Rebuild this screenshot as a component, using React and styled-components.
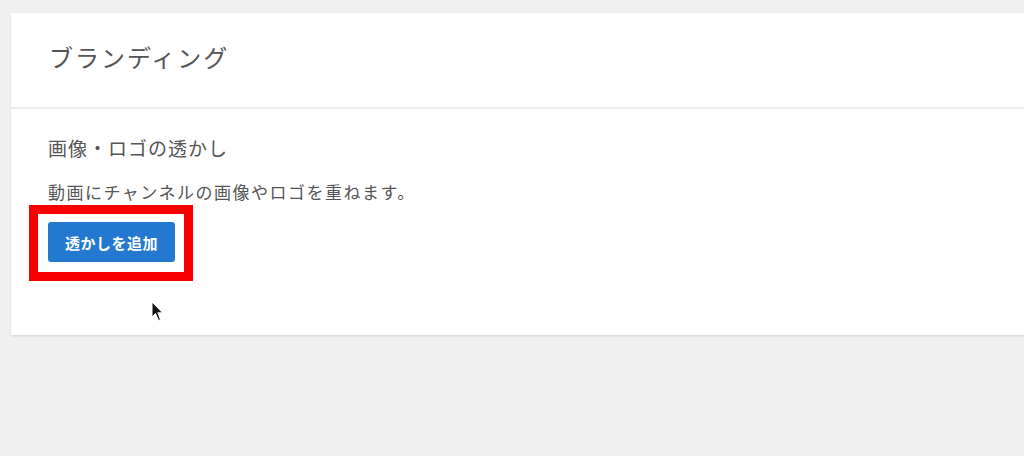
import React from "react";
import styled, { createGlobalStyle } from "styled-components";

const GlobalStyle = createGlobalStyle`
  html, body {
    margin: 0;
    padding: 0;
    background: #f0f0f0;
    font-family: "Noto Sans CJK JP", "Noto Sans", sans-serif;
  }
`;

const Page = styled.div`
  width: 1024px;
  height: 456px;
  overflow: hidden;
  padding: 13px 0 0 11px;
  box-sizing: border-box;
`;

const Card = styled.section`
  position: relative;
  width: 1040px;
  height: 322px;
  background: #fff;
  box-shadow: 0 1px 2px rgba(0, 0, 0, 0.12);
`;

const CardHeader = styled.div`
  height: 96px;
  box-sizing: border-box;
  display: flex;
  align-items: center;
  padding: 0 0 8px 38px;
  border-bottom: 2px solid #ececec;
`;

const Title = styled.h2`
  margin: 0;
  font-size: 24px;
  font-weight: 400;
  color: #555;
  letter-spacing: 2px;
`;

const Body = styled.div`
  padding: 25px 0 0 37px;
`;

const SectionTitle = styled.h3`
  margin: 0;
  font-size: 19px;
  font-weight: 400;
  color: #555;
  line-height: 28px;
  letter-spacing: 1px;
`;

const Desc = styled.p`
  margin: 16px 0 0;
  font-size: 17px;
  color: #555;
  line-height: 28px;
  letter-spacing: 1.5px;
`;

const ButtonSlot = styled.div`
  position: relative;
  display: inline-block;
  margin-top: 16px;
`;

const Button = styled.button`
  width: 127px;
  height: 40px;
  border: none;
  border-radius: 3px;
  background: #2279cf;
  color: #fff;
  font-family: inherit;
  font-size: 15px;
  font-weight: 700;
  letter-spacing: 0.5px;
  display: block;
`;

const Highlight = styled.div`
  position: absolute;
  left: -19px;
  top: -17px;
  right: -18px;
  bottom: -19px;
  border: 9px solid #f80000;
  pointer-events: none;
`;

const Cursor = styled.svg`
  position: absolute;
  left: 140px;
  top: 288px;
`;

export default function App() {
  return (
    <>
      <GlobalStyle />
      <Page>
        <Card>
          <CardHeader>
            <Title>ブランディング</Title>
          </CardHeader>
          <Body>
            <SectionTitle>画像・ロゴの透かし</SectionTitle>
            <Desc>動画にチャンネルの画像やロゴを重ねます。</Desc>
            <ButtonSlot>
              <Button>透かしを追加</Button>
              <Highlight />
            </ButtonSlot>
          </Body>
          <Cursor width="14" height="22" viewBox="0 0 14 22">
            <path
              d="M1 1 L1 16 L4.5 12.5 L7.5 19.5 L9.5 18.5 L6.8 11.8 L11.5 11.8 Z"
              fill="#111"
              stroke="#fff"
              strokeWidth="1"
            />
          </Cursor>
        </Card>
      </Page>
    </>
  );
}
